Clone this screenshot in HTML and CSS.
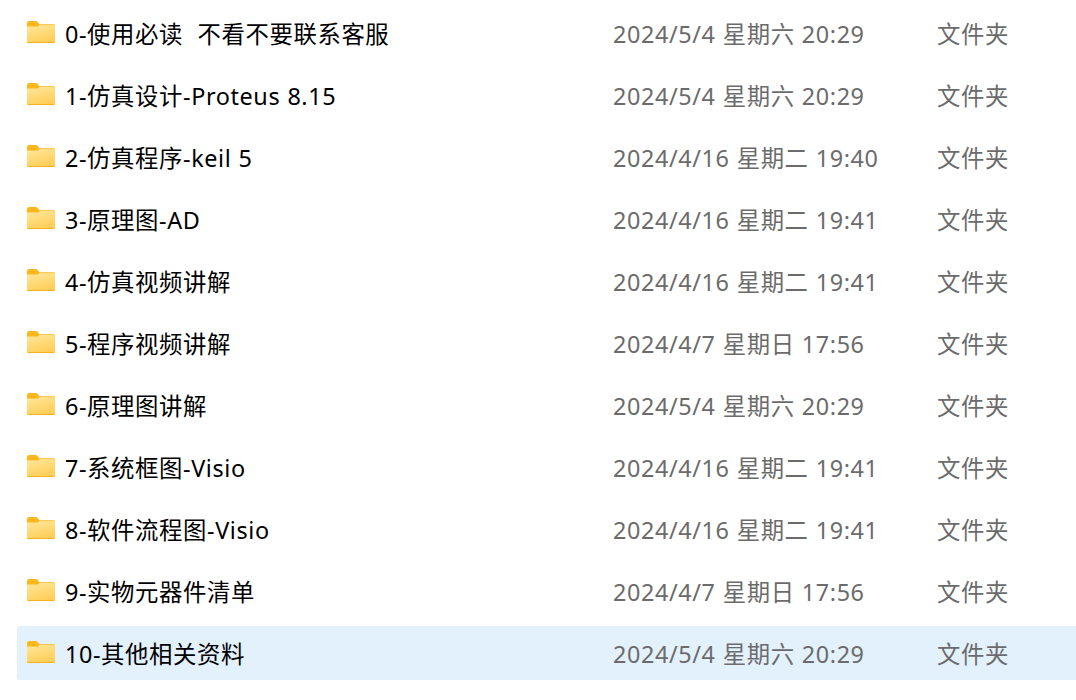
FILE: index.html
```html
<!DOCTYPE html>
<html lang="zh-CN">
<head>
  <meta charset="UTF-8" />
  <title>文件列表</title>
  <link rel="stylesheet" href="styles.css">
</head>
<body>
  <svg class="defs" width="0" height="0">
    <defs>
      <linearGradient id="folderFill" x1="0" y1="0" x2="0.4" y2="1">
        <stop offset="0" stop-color="#ffe79a" />
        <stop offset="1" stop-color="#ffcf5c" />
      </linearGradient>
      <symbol id="folder" viewBox="0 0 28 22">
        <path d="M0 2.5C0 1.1 0.9 0 2 0H8C9.3 0 10.2 0.5 11 1.4L12.6 3.2H26.6C27.4 3.2 28 3.8 28 4.6V8H0Z" fill="#fdb61c" />
        <path d="M0 5.6H10C11 5.6 11.8 5.2 12.6 4H26.8C27.5 4 28 4.5 28 5.2V20.6C28 21.4 27.4 22 26.6 22H1.4C0.6 22 0 21.4 0 20.6Z" fill="url(#folderFill)" />
        <path d="M0 20.6V20C0 20.8 0.6 21 1.4 21H26.6C27.4 21 28 20.8 28 20V20.6C28 21.4 27.4 22 26.6 22H1.4C0.6 22 0 21.4 0 20.6Z" fill="#f5b21e" />
      </symbol>
    </defs>
  </svg>

  <div class="file-list">
    <div class="row">
      <svg class="icon"><use href="#folder" /></svg>
      <span class="name">0-使用必读&nbsp; 不看不要联系客服</span>
      <span class="date">2024/5/4 星期六 20:29</span>
      <span class="type">文件夹</span>
    </div>
    <div class="row">
      <svg class="icon"><use href="#folder" /></svg>
      <span class="name">1-仿真设计-Proteus 8.15</span>
      <span class="date">2024/5/4 星期六 20:29</span>
      <span class="type">文件夹</span>
    </div>
    <div class="row">
      <svg class="icon"><use href="#folder" /></svg>
      <span class="name">2-仿真程序-keil 5</span>
      <span class="date">2024/4/16 星期二 19:40</span>
      <span class="type">文件夹</span>
    </div>
    <div class="row">
      <svg class="icon"><use href="#folder" /></svg>
      <span class="name">3-原理图-AD</span>
      <span class="date">2024/4/16 星期二 19:41</span>
      <span class="type">文件夹</span>
    </div>
    <div class="row">
      <svg class="icon"><use href="#folder" /></svg>
      <span class="name">4-仿真视频讲解</span>
      <span class="date">2024/4/16 星期二 19:41</span>
      <span class="type">文件夹</span>
    </div>
    <div class="row">
      <svg class="icon"><use href="#folder" /></svg>
      <span class="name">5-程序视频讲解</span>
      <span class="date">2024/4/7 星期日 17:56</span>
      <span class="type">文件夹</span>
    </div>
    <div class="row">
      <svg class="icon"><use href="#folder" /></svg>
      <span class="name">6-原理图讲解</span>
      <span class="date">2024/5/4 星期六 20:29</span>
      <span class="type">文件夹</span>
    </div>
    <div class="row">
      <svg class="icon"><use href="#folder" /></svg>
      <span class="name">7-系统框图-Visio</span>
      <span class="date">2024/4/16 星期二 19:41</span>
      <span class="type">文件夹</span>
    </div>
    <div class="row">
      <svg class="icon"><use href="#folder" /></svg>
      <span class="name">8-软件流程图-Visio</span>
      <span class="date">2024/4/16 星期二 19:41</span>
      <span class="type">文件夹</span>
    </div>
    <div class="row">
      <svg class="icon"><use href="#folder" /></svg>
      <span class="name">9-实物元器件清单</span>
      <span class="date">2024/4/7 星期日 17:56</span>
      <span class="type">文件夹</span>
    </div>
    <div class="row selected">
      <svg class="icon"><use href="#folder" /></svg>
      <span class="name">10-其他相关资料</span>
      <span class="date">2024/5/4 星期六 20:29</span>
      <span class="type">文件夹</span>
    </div>
  </div>
</body>
</html>
```

FILE: styles.css
```css
* {
  margin: 0;
  padding: 0;
  box-sizing: border-box;
}

body {
  background: white;
  font-family: "Noto Sans", "Noto Sans CJK SC", sans-serif;
  font-size: 23.4px;
  letter-spacing: 0.6px;
  word-spacing: 0.5px;
  overflow: hidden;
}

.defs {
  display: block;
}

.file-list {
  display: flex;
  flex-direction: column;
  gap: 8px;
  padding: 6px 0 20px 17px;
}

.row {
  display: flex;
  align-items: center;
  height: 54px;
  padding-left: 10px;
  border-radius: 2px 0 0 2px;
}

.row.selected {
  background: #e3f1fd;
}

.icon {
  width: 28px;
  height: 22px;
  margin-right: 10px;
  margin-bottom: 2px;
  flex-shrink: 0;
}

.name {
  width: 548px;
  color: #000;
  white-space: nowrap;
}

.date {
  width: 324px;
  color: #6b6b6b;
  white-space: nowrap;
}

.type {
  color: #6b6b6b;
  white-space: nowrap;
}
```
